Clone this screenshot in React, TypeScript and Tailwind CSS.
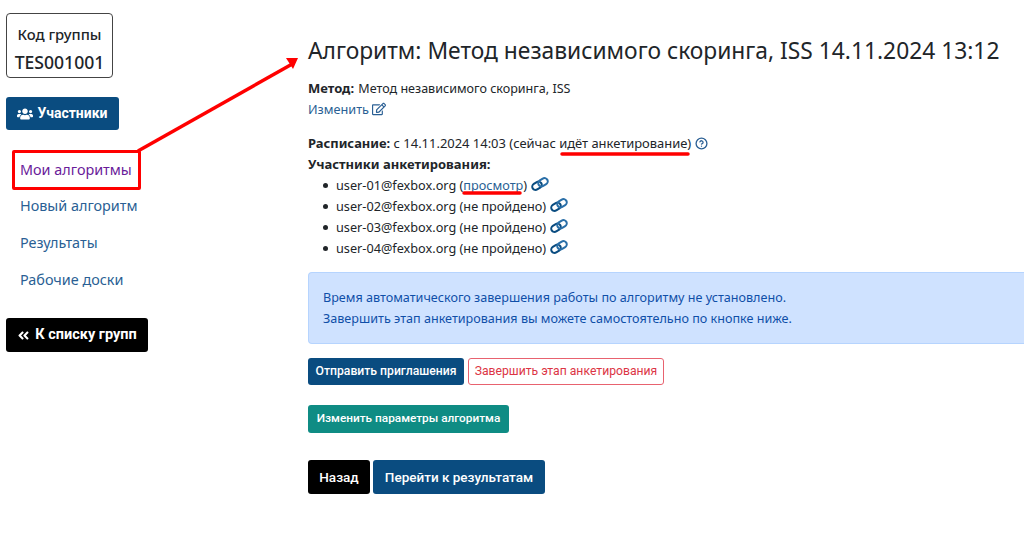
import { CircleHelp } from 'lucide-react';
import { FaAngleDoubleLeft, FaRegEdit, FaUsers } from 'react-icons/fa';

const users = [
  { email: 'user-01@fexbox.org', view: true },
  { email: 'user-02@fexbox.org', view: false },
  { email: 'user-03@fexbox.org', view: false },
  { email: 'user-04@fexbox.org', view: false },
];

const menu = ['Новый алгоритм', 'Результаты', 'Рабочие доски'];

function ChainIcon() {
  return (
    <svg className="block" width="18" height="14" viewBox="0 0 18 14" fill="none" stroke="#0a4c80" strokeWidth="2">
      <rect x="1" y="5.5" width="10" height="6.5" rx="3.25" transform="rotate(-32 6 8.75)" />
      <rect x="7" y="2" width="10" height="6.5" rx="3.25" stroke="#2a6fa8" transform="rotate(-32 12 5.25)" />
    </svg>
  );
}

export default function App() {
  return (
    <div className="relative flex h-[540px] w-[1024px] overflow-hidden bg-white font-['Noto_Sans',sans-serif] text-[12.7px] text-[#212529]">
      <aside className="flex w-[308px] shrink-0 flex-col items-start pl-[6px] pt-[13px]">
        <div className="flex h-[65px] w-[107px] flex-col items-center rounded-[4px] border border-[#444] pt-[10px]">
          <div className="text-[14.8px] leading-[20px] font-medium">Код группы</div>
          <div className="mt-[8px] text-[17.6px] leading-[20px] font-medium">TES001001</div>
        </div>
        <button className="mt-[19px] flex h-[33px] w-[113px] items-center justify-center gap-[4px] rounded-[3px] bg-[#0a4c80] font-['Roboto',sans-serif] text-[14px] font-bold text-white">
          <FaUsers size={16} />
          Участники
        </button>
        <nav className="mt-[20.5px] flex flex-col pl-[14px] text-[14.4px] leading-[20px] text-[#2a5f94]">
          <a className="mt-[9px] text-[#6a1b9a]">Мои алгоритмы</a>
          {menu.map((item) => (
            <a key={item} className="mt-[16.7px]">
              {item}
            </a>
          ))}
        </nav>
        <button className="mt-[28.5px] flex h-[34px] w-[142px] items-center justify-center gap-[5px] rounded-[3px] bg-black font-['Roboto',sans-serif] text-[14.5px] font-bold text-white">
          <FaAngleDoubleLeft size={13} />К списку групп
        </button>
      </aside>

      <main className="min-w-0 flex-1 pt-[36px]">
        <h1 className="text-[22.8px] leading-[30px] whitespace-nowrap">
          Алгоритм: Метод независимого скоринга, ISS 14.11.2024 13:12
        </h1>
        <p className="mt-[12px] h-[20px] text-[12.55px] leading-[20px]">
          <b className="mr-[1px] text-[13px] font-bold">Метод:</b> Метод независимого скоринга, ISS
        </p>
        <a className="mt-[1px] flex h-[20px] items-center gap-[3px] leading-[20px] text-[#2a5f94]">
          Изменить <FaRegEdit size={14} />
        </a>
        <p className="mt-[14px] flex h-[20px] items-center gap-[4px] text-[12.95px] leading-[20px]">
          <span>
            <b className="font-bold">Расписание:</b> с 14.11.2024 14:03 (сейчас идёт анкетирование)
          </span>
          <CircleHelp size={13} strokeWidth={2.4} className="text-[#2a5f94]" />
        </p>
        <p className="mt-[1px] h-[20px] text-[13px] leading-[20px] font-bold">Участники анкетирования:</p>
        <ul className="mt-[1px] pl-[15px] leading-[21px]">
          {users.map((user) => (
            <li key={user.email} className="flex h-[21px] items-center">
              <span className="mr-[8px] size-[5px] rounded-full bg-[#212529]" />
              <span>
                {user.email} (
                {user.view ? <a className="text-[#2a5f94]">просмотр</a> : 'не пройдено'})
              </span>
              <span className="mb-[3px] ml-[4px]">
                <ChainIcon />
              </span>
            </li>
          ))}
        </ul>
        <div className="mt-[13px] flex h-[72px] flex-col justify-center rounded-l-[4px] border border-r-0 border-[#b6d4fe] bg-[#cfe2ff] pl-[14px] text-[12.6px] leading-[21px] text-[#0f4fa8]">
          <div>Время автоматического завершения работы по алгоритму не установлено.</div>
          <div>Завершить этап анкетирования вы можете самостоятельно по кнопке ниже.</div>
        </div>
        <div className="mt-[14px] flex gap-[4px] font-['Roboto',sans-serif] font-medium">
          <button className="h-[27px] w-[156px] rounded-[3px] bg-[#0a4c80] text-[12.2px] text-white">
            Отправить приглашения
          </button>
          <button className="h-[27px] w-[196px] rounded-[3px] border border-[#e8626f] bg-white text-[12.2px] font-normal text-[#dc3545]">
            Завершить этап анкетирования
          </button>
        </div>
        <button className="mt-[20px] h-[28px] w-[201px] rounded-[3px] bg-[#0f8c84] font-['Roboto',sans-serif] text-[11.8px] font-medium text-white">
          Изменить параметры алгоритма
        </button>
        <div className="mt-[27px] flex gap-[3px] font-['Roboto',sans-serif] text-[13.5px] font-medium">
          <button className="h-[34px] w-[62px] rounded-[3px] bg-black text-white">Назад</button>
          <button className="h-[34px] w-[172px] rounded-[3px] bg-[#0a4c80] text-white">
            Перейти к результатам
          </button>
        </div>
      </main>

      {/* red annotations over the screenshot */}
      <div className="absolute top-[150px] left-[12px] h-[40px] w-[129px] rounded-[2px] border-[3px] border-[#f00]" />
      <svg className="absolute top-0 left-0" width="1024" height="540" fill="none">
        <path d="M138 151 L294 63" stroke="#f00" strokeWidth="3.5" />
        <path d="M298 58 L286 58 L293 69 Z" fill="#f00" />
        <path d="M562 154 H688" stroke="#f00" strokeWidth="3.5" strokeLinecap="round" />
        <path d="M464 193 H520" stroke="#f00" strokeWidth="3.5" strokeLinecap="round" />
      </svg>
    </div>
  );
}
